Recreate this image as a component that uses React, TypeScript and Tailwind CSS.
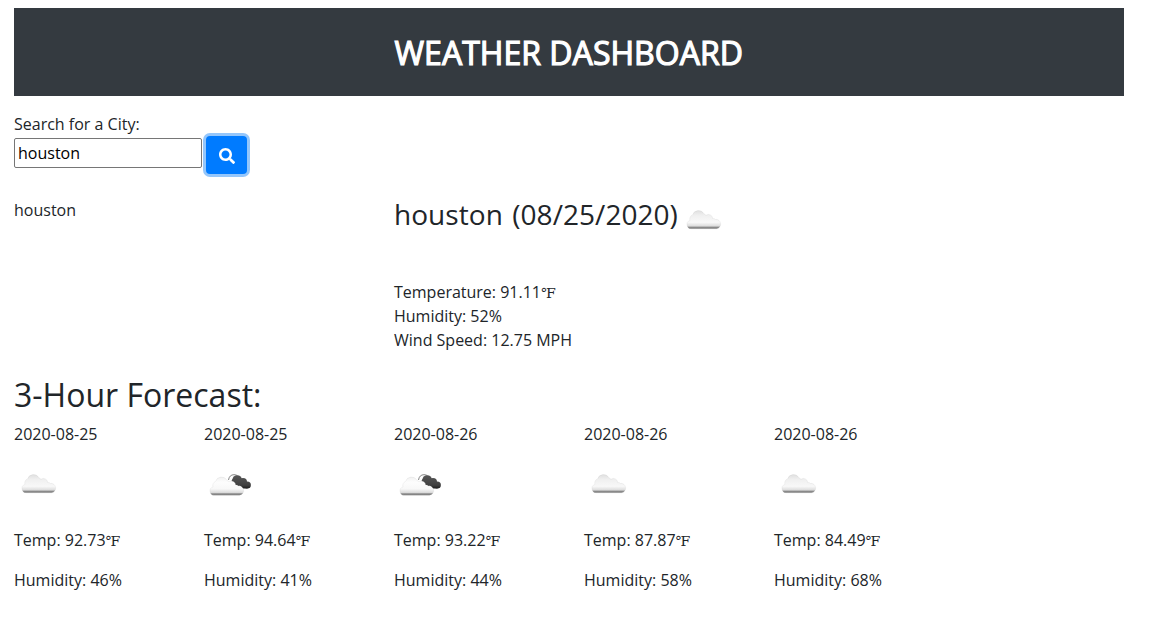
import React from "react";

function Cloud({ dark = false, id }: { dark?: boolean; id: string }) {
  return (
    <svg width="50" height="50" viewBox="0 0 50 50" className="block shrink-0">
      <defs>
        <linearGradient id={id} x1="0" y1="14" x2="0" y2="33" gradientUnits="userSpaceOnUse">
          <stop offset="0" stopColor={dark ? "#f0f0f0" : "#dedede"} />
          <stop offset="0.3" stopColor={dark ? "#fdfdfd" : "#f0f0f0"} />
          <stop offset="0.65" stopColor="#f8f8f8" />
          <stop offset="0.84" stopColor="#dddddd" />
          <stop offset="0.91" stopColor="#8c8c8c" />
          <stop offset="1" stopColor="#777777" />
        </linearGradient>
        <linearGradient id={`${id}-night`} x1="0" y1="14" x2="0" y2="29" gradientUnits="userSpaceOnUse">
          <stop offset="0" stopColor="#5a5a5a" />
          <stop offset="0.75" stopColor="#404040" />
          <stop offset="1" stopColor="#181818" />
        </linearGradient>
      </defs>
      {dark && (
        <>
          <path d="M24.500 20c.5-3.500 2.500-5.300 5.500-5.300 1.800 0 3.200.6 4 1.800" fill="none" stroke="#777" strokeWidth="0.9" />
          <g fill={`url(#${id}-night)`}>
            <circle cx="33.200" cy="20" r="4.800" />
            <circle cx="39" cy="22" r="4" />
            <circle cx="43.300" cy="25" r="3.600" />
            <path d="M28.500 19l-1.500 3 6 6.600h10.500v-6z" />
          </g>
        </>
      )}
      <g transform={dark ? "translate(-2 2.500)" : undefined}>
        <path
          d="M12.300 32.800A4.300 4.300 0 0 1 11 24.400A4.300 4.300 0 0 1 13.600 18.900A6.200 6.200 0 0 1 24.900 17.700Q26.200 18.600 27 19.300A4.200 4.200 0 0 1 33.700 22.600A2.800 2.800 0 0 1 36.400 23.400A4.700 4.700 0 0 1 37.500 32.800z"
          fill={`url(#${id})`}
          stroke="#bbbbbb"
          strokeOpacity="0.35"
          strokeWidth="0.5"
        />
      </g>
    </svg>
  );
}

function Fahrenheit() {
  return <span className="font-['Liberation_Serif','DejaVu_Serif',serif] text-[14px] leading-none">℉</span>;
}

const days = [
  { date: "2020-08-25", temp: "92.73", hum: 46, dark: false },
  { date: "2020-08-25", temp: "94.64", hum: 41, dark: true },
  { date: "2020-08-26", temp: "93.22", hum: 44, dark: true },
  { date: "2020-08-26", temp: "87.87", hum: 58, dark: false },
  { date: "2020-08-26", temp: "84.49", hum: 68, dark: false },
];

export default function App() {
  return (
    <div className="h-[633px] overflow-hidden bg-white pl-[14px] pt-2 font-['Open_Sans',sans-serif] text-base leading-6 text-[#212529]">
      <header className="h-[88px] w-[1110px] bg-[#343a40] pl-[380.5px] pt-[26px]">
        <h1 className="text-[32px] font-normal leading-[38px] tracking-[0.03px] text-white [-webkit-text-stroke:1.2px_white]">WEATHER DASHBOARD</h1>
      </header>
      <div className="mt-4 h-[86px]">
        <label className="block">Search for a City:</label>
        <div className="flex items-start gap-1">
          <input className="mt-[2px] h-[30px] w-[188px] rounded-[2px] border border-[#767676] px-[3px] text-black" defaultValue="houston" />
          <button className="flex h-[38px] w-[41px] items-center justify-center rounded bg-[#007bff] pt-[2px] ring-3 ring-[#94c6fb]">
            <svg width="16" height="16" viewBox="0 0 512 512" fill="white">
              <path d="M505 442.700L405.300 343c-4.500-4.500-10.600-7-17-7H372c27.600-35.300 44-79.700 44-128C416 93.100 322.900 0 208 0S0 93.100 0 208s93.100 208 208 208c48.300 0 92.700-16.400 128-44v16.300c0 6.400 2.500 12.500 7 17l99.700 99.700c9.400 9.400 24.600 9.400 33.900 0l28.300-28.300c9.400-9.400 9.400-24.600.1-34zM208 336c-70.700 0-128-57.200-128-128 0-70.700 57.200-128 128-128 70.700 0 128 57.200 128 128 0 70.700-57.200 128-128 128z" />
            </svg>
          </button>
        </div>
      </div>
      <main className="flex h-[178px]">
        <p className="w-[380px]">houston</p>
        <section>
          <h2 className="flex h-[82px] text-[28px] leading-[32px] tracking-[0.05px] [word-spacing:2px]">
            houston (08/25/2020)
            <span className="-mt-[2px] ml-[1px]">
              <Cloud id="current" />
            </span>
          </h2>
          <p className="h-6">Temperature: 91.11<Fahrenheit /></p>
          <p>Humidity: 52%</p>
          <p>Wind Speed: 12.75 MPH</p>
        </section>
      </main>
      <h2 className="h-[46px] text-[32px] leading-[38px]">3-Hour Forecast:</h2>
      <div className="flex">
        {days.map((d, i) => (
          <article key={i} className="w-[190px]">
            <p className="h-[38px]">{d.date}</p>
            <Cloud dark={d.dark} id={`cloud-${i}`} />
            <p className="mt-[18px] h-6">Temp: {d.temp}<Fahrenheit /></p>
            <p className="mt-4">Humidity: {d.hum}%</p>
          </article>
        ))}
      </div>
    </div>
  );
}
